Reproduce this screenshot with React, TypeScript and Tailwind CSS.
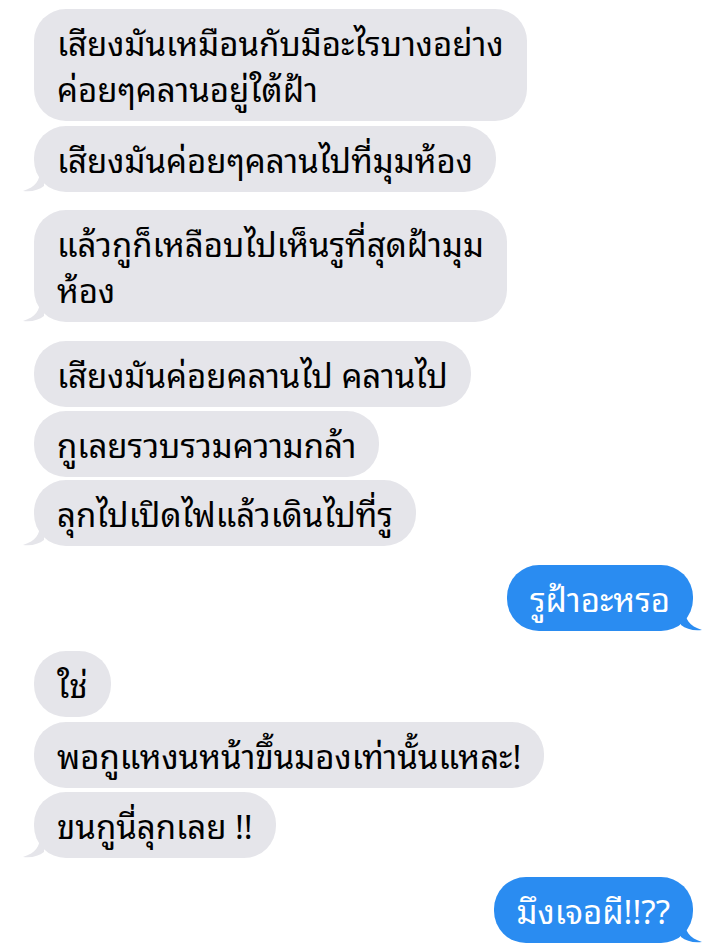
type Msg = {
  text: string;
  me?: boolean;
  tail?: boolean;
  mt: string;
};

const messages: Msg[] = [
  { text: "เสียงมันเหมือนกับมีอะไรบางอย่าง\nค่อยๆคลานอยู่ใต้ฝ้า", mt: "mt-[9px]" },
  { text: "เสียงมันค่อยๆคลานไปที่มุมห้อง", tail: true, mt: "mt-[5px]" },
  { text: "แล้วกูก็เหลือบไปเห็นรูที่สุดฝ้ามุม\nห้อง", tail: true, mt: "mt-[18px]" },
  { text: "เสียงมันค่อยคลานไป คลานไป", mt: "mt-[19px]" },
  { text: "กูเลยรวบรวมความกล้า", mt: "mt-[4px]" },
  { text: "ลุกไปเปิดไฟแล้วเดินไปที่รู", tail: true, mt: "mt-[3px]" },
  { text: "รูฝ้าอะหรอ", me: true, tail: true, mt: "mt-[19px]" },
  { text: "ใช่", mt: "mt-[20px]" },
  { text: "พอกูแหงนหน้าขึ้นมองเท่านั้นแหละ!", mt: "mt-[5px]" },
  { text: "ขนกูนี่ลุกเลย !!", tail: true, mt: "mt-[4px]" },
  { text: "มึงเจอผี!!??", me: true, tail: true, mt: "mt-[19px]" },
];

function Tail({ me }: { me?: boolean }) {
  if (me) {
    return (
      <svg
        className="absolute -right-[10px] bottom-0"
        width="22"
        height="22"
        viewBox="0 0 22 22"
      >
        <path d="M0 0 L4 0 C4 10 8 17 21 21 C12 22 5 20 0 16 Z" fill="#2a8cf1" />
      </svg>
    );
  }
  return (
    <svg
      className="absolute -left-[12px] bottom-0"
      width="22"
      height="22"
      viewBox="0 0 22 22"
    >
      <path d="M22 0 L18 0 C18 10 14 17 1 21 C10 22 17 20 22 16 Z" fill="#e5e5ea" />
    </svg>
  );
}

function Bubble({ m }: { m: Msg }) {
  return (
    <div className={`flex ${m.me ? "justify-end" : "justify-start"} ${m.mt}`}>
      <div
        className={`relative rounded-[32px] px-[23px] py-[10px] text-[33px] leading-[46px] whitespace-pre ${
          m.me ? "bg-[#2a8cf1] text-white" : "bg-[#e5e5ea] text-black"
        }`}
      >
        {m.text}
        {m.tail && <Tail me={m.me} />}
      </div>
    </div>
  );
}

export default function App() {
  return (
    <div
      className="w-[720px] h-[944px] bg-white overflow-hidden pl-[34px] pr-[27px]"
      style={{ fontFamily: '"Noto Sans Thai Looped", "Noto Sans Thai", "Loma", "Garuda", "Noto Sans", sans-serif' }}
    >
      {messages.map((m, i) => (
        <Bubble key={i} m={m} />
      ))}
    </div>
  );
}
